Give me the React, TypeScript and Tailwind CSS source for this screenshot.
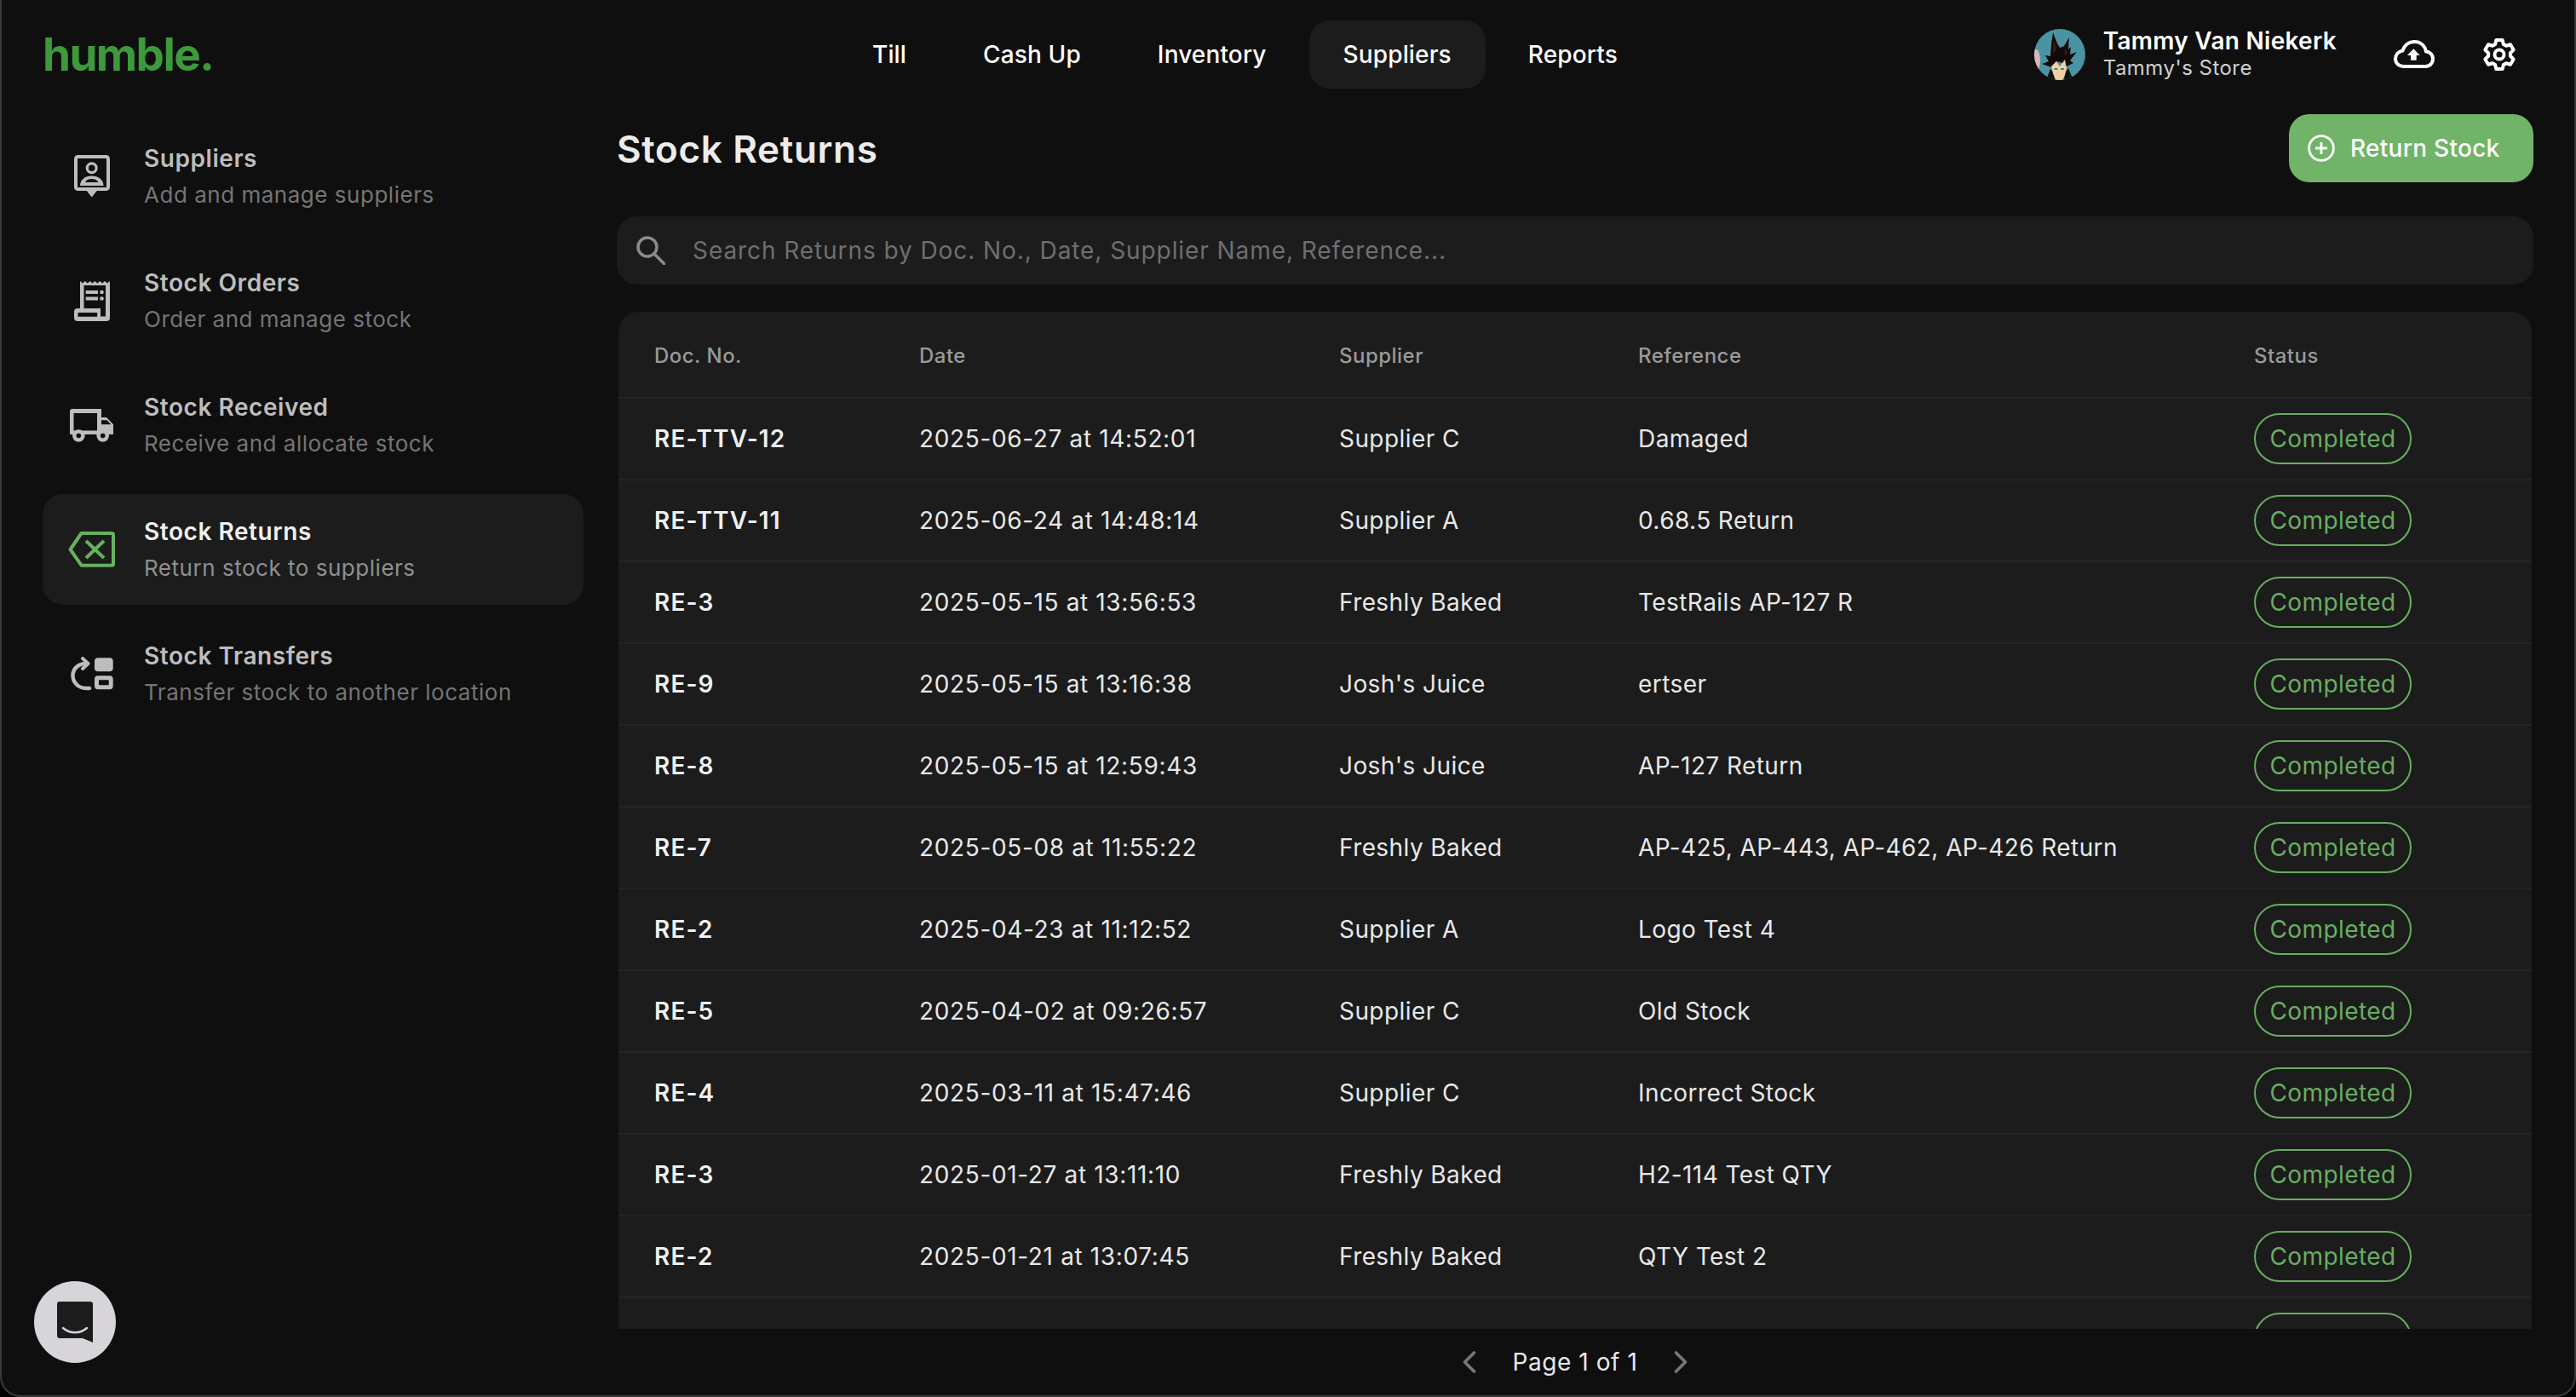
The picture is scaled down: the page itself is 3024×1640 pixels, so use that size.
import { ChevronLeft, ChevronRight } from "lucide-react";

const navItems = ["Till", "Cash Up", "Inventory", "Suppliers", "Reports"];

const rows = [
  ["RE-TTV-12", "2025-06-27 at 14:52:01", "Supplier C", "Damaged"],
  ["RE-TTV-11", "2025-06-24 at 14:48:14", "Supplier A", "0.68.5 Return"],
  ["RE-3", "2025-05-15 at 13:56:53", "Freshly Baked", "TestRails AP-127 R"],
  ["RE-9", "2025-05-15 at 13:16:38", "Josh's Juice", "ertser"],
  ["RE-8", "2025-05-15 at 12:59:43", "Josh's Juice", "AP-127 Return"],
  ["RE-7", "2025-05-08 at 11:55:22", "Freshly Baked", "AP-425, AP-443, AP-462, AP-426 Return"],
  ["RE-2", "2025-04-23 at 11:12:52", "Supplier A", "Logo Test 4"],
  ["RE-5", "2025-04-02 at 09:26:57", "Supplier C", "Old Stock"],
  ["RE-4", "2025-03-11 at 15:47:46", "Supplier C", "Incorrect Stock"],
  ["RE-3", "2025-01-27 at 13:11:10", "Freshly Baked", "H2-114 Test QTY"],
  ["RE-2", "2025-01-21 at 13:07:45", "Freshly Baked", "QTY Test 2"],
  ["", "", "", ""],
];

function SuppliersIcon() {
  return (
    <svg width="42" height="50" viewBox="0 0 42 50" fill="none">
      <rect x="2" y="2" width="38" height="38" rx="2.5" stroke="#bdbdbd" strokeWidth="4" />
      <path d="M14 41h13.5l-6.8 8.5z" fill="#bdbdbd" />
      <circle cx="20.7" cy="15.3" r="5.4" stroke="#bdbdbd" strokeWidth="3.2" />
      <path d="M7 36c0-7 6-11.5 13.7-11.5S34.5 29 34.5 36z" fill="#bdbdbd" />
      <path d="M13 32c1-2.5 4-4 7.7-4s6.3 1.500 7.800 4z" fill="#0f0f0f" />
    </svg>
  );
}

function OrdersIcon() {
  return (
    <svg width="42" height="47" viewBox="0 0 42 47">
      <path
        fillRule="evenodd"
        fill="#bdbdbd"
        d="M7 0l2.900 2.500L12.800 0l2.900 2.500L18.600 0l2.900 2.500L24.400 0l2.900 2.500L30.200 0l2.900 2.500L36 0l3 2.500L42 0v43q0 4-4 4H4q-4 0-4-4v-7q0-4 4-4h3zM11.500 5v27H31v9.500h6V5zM4.500 37v4.700h22.700V37z"
      />
      <rect x="13.700" y="11" width="14.300" height="4" fill="#bdbdbd" />
      <rect x="13.700" y="18.500" width="14.300" height="4" fill="#bdbdbd" />
      <circle cx="32.500" cy="13" r="2.300" fill="#bdbdbd" />
      <circle cx="32.500" cy="20.500" r="2.300" fill="#bdbdbd" />
    </svg>
  );
}

function TruckIcon() {
  return (
    <svg width="52" height="39" viewBox="0 0 52 39">
      <path
        fillRule="evenodd"
        fill="#bdbdbd"
        d="M3 0h34v10h6l8 8.300V30H0V3q0-3 3-3zM4.500 5v20.500h27.500V5zM37 13.300v5h11.300l-4.800-5z"
      />
      <circle cx="10.300" cy="31.500" r="7.300" fill="#bdbdbd" />
      <circle cx="10.300" cy="31.500" r="2.800" fill="#0f0f0f" />
      <circle cx="38.700" cy="31.500" r="7.300" fill="#bdbdbd" />
      <circle cx="38.700" cy="31.500" r="2.800" fill="#0f0f0f" />
    </svg>
  );
}

function ReturnsIcon() {
  return (
    <svg width="56" height="42" viewBox="0 0 56 42" fill="none" stroke="#66b15f" strokeWidth="4">
      <path d="M2.500 21 15.500 2H51q2 0 2 2v33.700q0 2-2 2H15.500z" strokeLinejoin="round" />
      <path d="M21 11l21 20M42 11 21 31" />
    </svg>
  );
}

function TransfersIcon() {
  return (
    <svg width="50" height="40" viewBox="0 0 50 40" fill="none">
      <rect x="28" y="1.300" width="21.700" height="16" rx="4" fill="#bdbdbd" />
      <path
        fillRule="evenodd"
        fill="#bdbdbd"
        d="M32 22.300h13.700q4 0 4 4v8q0 4-4 4H32q-4 0-4-4v-8q0-4 4-4zM33 27.300v6h11.700v-6z"
      />
      <path
        d="M22 37h-4C9 37 2.500 30 2.500 22 2.500 14 9 8 18 8"
        stroke="#bdbdbd"
        strokeWidth="4.500"
        strokeLinecap="round"
      />
      <path d="M14 2l6.500 6L14 14" stroke="#bdbdbd" strokeWidth="4" strokeLinecap="round" strokeLinejoin="round" />
    </svg>
  );
}

const sideItems = [
  { title: "Suppliers", sub: "Add and manage suppliers", icon: <SuppliersIcon /> },
  { title: "Stock Orders", sub: "Order and manage stock", icon: <OrdersIcon /> },
  { title: "Stock Received", sub: "Receive and allocate stock", icon: <TruckIcon /> },
  { title: "Stock Returns", sub: "Return stock to suppliers", icon: <ReturnsIcon />, active: true },
  { title: "Stock Transfers", sub: "Transfer stock to another location", icon: <TransfersIcon /> },
];

function Avatar() {
  return (
    <svg width="60" height="60" viewBox="0 0 60 60" className="rounded-full">
      <rect width="60" height="60" fill="#4a93a3" />
      <ellipse cx="2" cy="37" rx="5" ry="13" fill="#d9b7bd" />
      <path d="M14 60l5-13 5 5 1 8zM46 60l-6-14-4 6-1 8z" fill="#111" />
      <path
        d="M20 45 9 41l8-3-4-7 6 1 1-14 2-14 5 13 3 5 5-2 6-10-1 14 3-3-1 9 8-3-8 10 4 3-8 4-5-4-7-2z"
        fill="#120a08"
      />
      <path d="M23 12l3 12-4 5zM37 22l-2 9 4-2z" fill="#3a1a12" />
      <path d="M20 44l6-6 4 6 6-8 2 10-2 8-3 6h-8l-3-8z" fill="#f0cfa0" />
      <rect x="23.500" y="46" width="4" height="2" fill="#3f8c9e" />
      <rect x="31" y="46" width="4" height="2" fill="#3f8c9e" />
    </svg>
  );
}

function UploadIcon() {
  return (
    <svg width="48" height="34" viewBox="0 0 48 34" fill="none">
      <path
        d="M12 31h25c5.500 0 9-4 9-9s-4-8.500-8-8.500C36.500 6 31 2 24.500 2 18 2 12.500 6 10.500 12.500 5.500 13.500 2 17 2 22s4 9 10 9z"
        stroke="#fff"
        strokeWidth="4"
        strokeLinejoin="round"
      />
      <path d="M23.300 10.300 16 18h4v5.700h6.700V18h4z" fill="#fff" />
    </svg>
  );
}

// six flat teeth, one pointing straight up
const gearPath =
  [0, 1, 2, 3, 4, 5]
    .map((i) => {
      const a = -90 + 60 * i;
      const pt = (deg: number, r: number) => {
        const t = ((a + deg) * Math.PI) / 180;
        return `${(20 + r * Math.cos(t)).toFixed(2)} ${(20 + r * Math.sin(t)).toFixed(2)}`;
      };
      return `${i === 0 ? "M" : "L"}${pt(-22, 13)} L${pt(-12, 17.5)} L${pt(12, 17.5)} L${pt(22, 13)}`;
    })
    .join(" ") + " Z";

function GearIcon() {
  return (
    <svg width="40" height="40" viewBox="0 0 40 40" fill="none" stroke="#fff" strokeWidth="4" strokeLinejoin="round">
      <path d={gearPath} />
      <circle cx="20" cy="20" r="5.500" />
    </svg>
  );
}

function SearchIcon() {
  return (
    <svg width="34" height="34" viewBox="0 0 34 34" fill="none" stroke="#8c8c8c" strokeWidth="3.500">
      <circle cx="13" cy="13" r="11" />
      <path d="M21 21l11.500 11.500" strokeLinecap="round" />
    </svg>
  );
}

function PlusIcon() {
  return (
    <svg width="32" height="32" viewBox="0 0 32 32" fill="none" stroke="#fff" strokeWidth="2.800">
      <circle cx="16" cy="16" r="14.400" />
      <path d="M16 9v14M9 16h14" />
    </svg>
  );
}

function ChatIcon() {
  return (
    <svg width="42" height="48" viewBox="0 0 42 48" fill="none">
      <path d="M3 0h36q3 0 3 3v45l-12-5H3q-3 0-3-3V3q0-3 3-3z" fill="#1c1c1c" />
      <path d="M7 31c8 7 20 7 28 0" stroke="#d8d5da" strokeWidth="2.400" strokeLinecap="round" />
    </svg>
  );
}

export default function App() {
  return (
    <div className="bg-black">
      <div className="relative flex h-[1640px] w-[3024px] flex-col overflow-hidden rounded-b-[24px] border-x-2 border-b-2 border-[#3a3a3a] bg-[#0f0f0f] font-[Inter,sans-serif] text-[28px] text-[#e8e8e8]">
        <header className="flex h-[128px] shrink-0 items-center pl-[48px] pr-[68px]">
          <div className="w-[934px] text-[53px] font-bold leading-none tracking-[-0.03em] text-[#3c9a3c]">humble.</div>
          <nav className="flex gap-[10px]">
            {navItems.map((item) => (
              <div
                key={item}
                className={`flex h-[80px] items-center rounded-[24px] px-10 font-medium tracking-[0.005em] text-white ${
                  item === "Suppliers" ? "bg-[#1c1c1c]" : ""
                }`}
              >
                {item}
              </div>
            ))}
          </nav>
          <div className="ml-auto flex items-center gap-[21px]">
            <Avatar />
            <div className="flex flex-col">
              <span className="text-[28px] font-semibold leading-[32px] tracking-[0.01em] text-white">
                Tammy Van Niekerk
              </span>
              <span className="text-[24px] leading-[32px] tracking-[0.02em] text-[#d0d0d0]">Tammy's Store</span>
            </div>
          </div>
          <div className="ml-[67px]">
            <UploadIcon />
          </div>
          <div className="ml-[56px]">
            <GearIcon />
          </div>
        </header>

        <div className="flex min-h-0 flex-1">
          <aside className="flex w-[722px] shrink-0 flex-col gap-4 pl-[48px] pr-[39px] pt-[14px]">
            {sideItems.map((s) => (
              <div
                key={s.title}
                className={`flex h-[130px] items-center rounded-[24px] ${s.active ? "bg-[#1c1c1c]" : ""}`}
              >
                <div className="flex w-[119px] shrink-0 justify-center pr-[3px]">{s.icon}</div>
                <div className="flex flex-col gap-[7px]">
                  <span
                    className={`text-[28px] font-semibold leading-[36px] tracking-[0.02em] ${s.active ? "text-[#f0f0f0]" : "text-[#bdbdbd]"}`}
                  >
                    {s.title}
                  </span>
                  <span
                    className={`text-[26px] leading-[36px] tracking-[0.02em] ${s.active ? "text-[#8f8f8f]" : "text-[#757575]"}`}
                  >
                    {s.sub}
                  </span>
                </div>
              </div>
            ))}
          </aside>

          <main className="flex min-w-0 flex-1 flex-col pr-[48px] pt-[6px]">
            <div className="flex h-[80px] shrink-0 items-center justify-between">
              <h1 className="pt-[2px] text-[44px] font-semibold tracking-[0.015em] text-[#ececec]">Stock Returns</h1>
              <button className="flex h-[80px] w-[287px] items-center gap-[18px] rounded-[24px] bg-[#71b469] pl-[22px] font-medium tracking-[0.01em] text-white">
                <PlusIcon />
                Return Stock
              </button>
            </div>

            <div className="mt-10 flex h-[80px] shrink-0 items-center gap-[32px] rounded-[24px] bg-[#1c1c1c] pl-[23px]">
              <SearchIcon />
              <span className="tracking-[0.033em] text-[#6f6f6f]">
                Search Returns by Doc. No., Date, Supplier Name, Reference...
              </span>
            </div>

            <div className="mx-[2px] mt-8 min-h-0 flex-1 overflow-hidden rounded-t-[24px] bg-[#1c1c1c]">
              <div className="grid h-[102px] grid-cols-[311px_493px_351px_723px_1fr] items-center border-b-2 border-[#252525] pl-[42px] pt-[3px] text-[24px] font-medium tracking-[0.02em] text-[#9a9a9a]">
                <span>Doc. No.</span>
                <span>Date</span>
                <span>Supplier</span>
                <span>Reference</span>
                <span>Status</span>
              </div>
              {rows.map((r, i) => (
                <div
                  key={i}
                  className="grid h-[96px] grid-cols-[311px_493px_351px_723px_1fr] items-center border-b-2 border-[#252525] pl-[42px] tracking-[0.015em]"
                >
                  <span className="font-semibold tracking-[0.04em] text-[#f0f0f0]">{r[0]}</span>
                  <span className="tracking-[0.023em]">{r[1]}</span>
                  <span>{r[2]}</span>
                  <span>{r[3]}</span>
                  <span className="flex h-[60px] w-[185px] items-center justify-center rounded-full border-2 border-[#69ad62] text-[#69ad62]">
                    {r[0] ? "Completed" : null}
                  </span>
                </div>
              ))}
            </div>

            <div className="flex h-[78px] shrink-0 items-center justify-center gap-[29px]">
              <ChevronLeft size={44} strokeWidth={2} color="#777" />
              <span className="tracking-[0.02em] text-[#e8e8e8]">Page 1 of 1</span>
              <ChevronRight size={44} strokeWidth={2} color="#777" />
            </div>
          </main>
        </div>

        <div className="absolute bottom-[38px] left-[38px] flex h-[96px] w-[96px] items-center justify-center rounded-full bg-[#d8d5da]">
          <ChatIcon />
        </div>
      </div>
    </div>
  );
}
